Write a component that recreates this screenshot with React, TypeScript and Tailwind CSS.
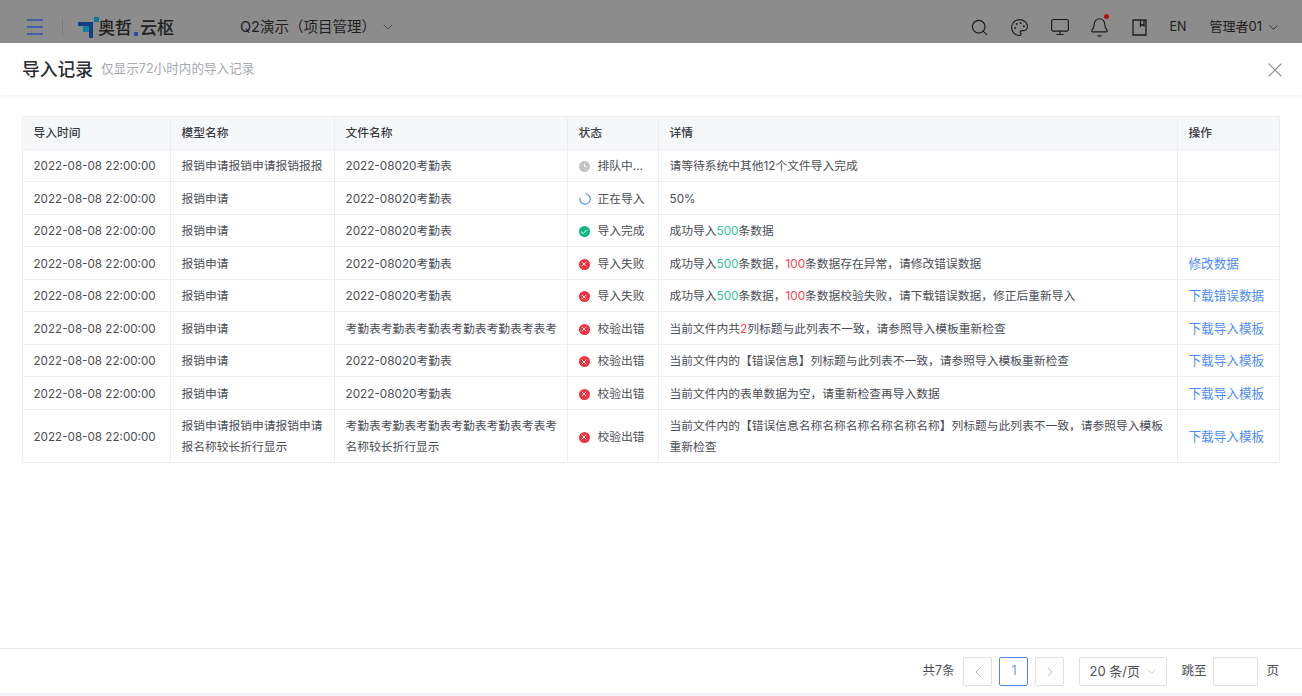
import React from "react";
import { Search, Palette, Monitor, Bell, ChevronDown, ChevronLeft, ChevronRight, X, Check } from "lucide-react";

const TIME = "2022-08-08 22:00:00";
const G = ({ children }: { children: React.ReactNode }) => <span className="text-[#32c69a]">{children}</span>;
const R = ({ children }: { children: React.ReactNode }) => <span className="text-[#f4484f]">{children}</span>;

function StatusIcon({ kind }: { kind: string }) {
  if (kind === "wait")
    return (
      <svg width="11" height="11" viewBox="0 0 11 11" fill="none">
        <circle cx="5.5" cy="5.5" r="5.5" fill="#c4c4c4" />
        <path d="M5.5 2.8v3h2.2" stroke="#fff" strokeWidth="0.9" />
      </svg>
    );
  if (kind === "run")
    return (
      <svg width="12" height="12" viewBox="0 0 12 12" fill="none">
        <path d="M6.8 0.8A5.2 5.2 0 1 1 0.9 5" stroke="#4d83f5" strokeWidth="1.1" strokeLinecap="round" />
      </svg>
    );
  if (kind === "ok")
    return (
      <span className="flex h-[11px] w-[11px] items-center justify-center rounded-full bg-[#10b77f] text-white">
        <Check size={8} strokeWidth={3} />
      </span>
    );
  return (
    <span className="flex h-[11px] w-[11px] items-center justify-center rounded-full bg-[#ef3340] text-white">
      <X size={8} strokeWidth={2.5} />
    </span>
  );
}

type Row = { model: React.ReactNode; file: React.ReactNode; kind: string; status: string; detail: React.ReactNode; op?: string; tall?: boolean };

const rows: Row[] = [
  { model: "报销申请报销申请报销报报", file: "2022-08020考勤表", kind: "wait", status: "排队中...", detail: "请等待系统中其他12个文件导入完成" },
  { model: "报销申请", file: "2022-08020考勤表", kind: "run", status: "正在导入", detail: "50%" },
  { model: "报销申请", file: "2022-08020考勤表", kind: "ok", status: "导入完成", detail: <>成功导入<G>500</G>条数据</> },
  { model: "报销申请", file: "2022-08020考勤表", kind: "err", status: "导入失败", detail: <>成功导入<G>500</G>条数据，<R>100</R>条数据存在异常，请修改错误数据</>, op: "修改数据" },
  { model: "报销申请", file: "2022-08020考勤表", kind: "err", status: "导入失败", detail: <>成功导入<G>500</G>条数据，<R>100</R>条数据校验失败，请下载错误数据，修正后重新导入</>, op: "下载错误数据" },
  { model: "报销申请", file: "考勤表考勤表考勤表考勤表考勤表考表考", kind: "err", status: "校验出错", detail: <>当前文件内共<R>2</R>列标题与此列表不一致，请参照导入模板重新检查</>, op: "下载导入模板" },
  { model: "报销申请", file: "2022-08020考勤表", kind: "err", status: "校验出错", detail: "当前文件内的【错误信息】列标题与此列表不一致，请参照导入模板重新检查", op: "下载导入模板" },
  { model: "报销申请", file: "2022-08020考勤表", kind: "err", status: "校验出错", detail: "当前文件内的表单数据为空，请重新检查再导入数据", op: "下载导入模板" },
  { model: "报销申请报销申请报销申请报名称较长折行显示", file: "考勤表考勤表考勤表考勤表考勤表考表考名称较长折行显示", kind: "err", status: "校验出错", detail: "当前文件内的【错误信息名称名称名称名称名称名称】列标题与此列表不一致，请参照导入模板重新检查", op: "下载导入模板", tall: true },
];

const th = "border border-[#edeef2] bg-[#f6f7f9] px-[10.5px] pt-[2px] text-left align-middle font-medium text-[#383c43]";
const base = "border border-[#edeef2] pl-[10.5px] pr-[9px] align-middle leading-[21px]";
const td = base + " pt-[2px]";
const slot = "flex w-[40px] justify-center";
const btn = "flex h-[29px] w-[29px] items-center justify-center rounded-[2px] border";

export default function App() {
  return (
    <div
      className="flex h-[696px] w-[1302px] flex-col overflow-hidden bg-[#f3f4f7] text-[#4a4e55]"
      style={{ fontFamily: 'Inter, "Noto Sans CJK SC", sans-serif' }}
    >
      {/* dimmed top navigation */}
      <header className="flex h-[43px] shrink-0 items-center bg-[#8c8c8c] pt-[11px] text-[#1d1d1d]">
        <svg className="ml-[27px]" width="16" height="16" viewBox="0 0 16 16" fill="none" stroke="#2a50b4" strokeWidth="1.5">
          <path d="M0 1h16M0 8h16M0 15h16" />
        </svg>
        <div className="ml-[19px] h-[18px] w-px bg-[#7d7d7d]" />
        <svg className="ml-[15px]" width="21" height="21" viewBox="0 0 21 21">
          <path d="M0 5h15v16h-4V9H0z" fill="#123f80" />
          <rect x="16" y="0" width="5" height="5" fill="#11789a" />
          <path d="M5 9h6v6H5z" fill="#0f7fa8" />
        </svg>
        <span className="ml-[-1px] mt-[3px] text-[17px] font-medium leading-none text-[#222]">奥哲</span>
        <span className="ml-[2px] mt-[14px] h-[4px] w-[4px] bg-[#1c4fb0]" />
        <span className="ml-[2px] mt-[3px] text-[17px] font-medium leading-none text-[#222]">云枢</span>
        <span className="ml-[66px] text-[14.5px] leading-none text-[#1f1f1f]">Q2演示（项目管理）</span>
        <ChevronDown className="ml-[4px] text-[#3a3a3a]" size={16} strokeWidth={1.2} />
        <div className="ml-auto flex items-center">
          <span className={slot}><Search size={19} strokeWidth={1.5} /></span>
          <span className={slot}><Palette size={19} strokeWidth={1.4} /></span>
          <span className={slot}><Monitor size={20} strokeWidth={1.4} /></span>
          <span className={slot}>
            <span className="relative flex">
              <Bell size={21} strokeWidth={1.3} />
              <span className="absolute right-[1px] top-[-3px] h-[5px] w-[5px] rounded-full bg-[#b80d0d]" />
            </span>
          </span>
          <span className={slot}>
            <svg width="15" height="17" viewBox="0 0 15 17" fill="none" stroke="#1d1d1d" strokeWidth="1.3">
              <path d="M1 1h13v15H1zM8.5 1v6l1.7-1.4L12 7V1" />
            </svg>
          </span>
          <span className="ml-[10px] text-[12.5px]">EN</span>
          <span className="ml-[23px] text-[13px]">管理者01</span>
          <ChevronDown className="ml-[4px] mr-[21px]" size={15} strokeWidth={1.2} />
        </div>
      </header>

      {/* drawer */}
      <main className="flex min-h-0 flex-1 flex-col bg-white">
        <div className="z-10 flex h-[52px] shrink-0 items-center pl-[22px] pr-[15px] pt-[1px] shadow-[0_1px_3px_rgba(30,50,110,0.08)]">
          <h1 className="text-[17.75px] font-medium leading-none text-[#2a2d33]">导入记录</h1>
          <span className="ml-[8px] text-[12.6px] leading-none text-[#a6a9af]">仅显示72小时内的导入记录</span>
          <X className="ml-auto text-[#8f8f8f]" size={24} strokeWidth={1.1} />
        </div>

        <div className="min-h-0 flex-1 px-[22px] pt-[21px]">
          <table className="w-[1257px] table-fixed border-collapse text-[11.75px]">
            <colgroup>
              <col className="w-[148px]" />
              <col className="w-[164px]" />
              <col className="w-[233px]" />
              <col className="w-[91px]" />
              <col className="w-[519px]" />
              <col className="w-[102px]" />
            </colgroup>
            <thead>
              <tr className="h-[33px]">
                {["导入时间", "模型名称", "文件名称", "状态", "详情", "操作"].map((h) => (
                  <th key={h} className={th}>{h}</th>
                ))}
              </tr>
            </thead>
            <tbody>
              {rows.map((r, i) => (
                <tr key={i} className={r.tall ? "h-[53px]" : i % 2 === 0 ? "h-[32px]" : "h-[33px]"}>
                  <td className={td + " whitespace-nowrap text-[11.67px]"}>{TIME}</td>
                  <td className={td}>{r.model}</td>
                  <td className={td}>{r.file}</td>
                  <td className={td}>
                    <div className="flex items-center whitespace-nowrap">
                      <span className="flex w-[19px] shrink-0">
                        <StatusIcon kind={r.kind} />
                      </span>
                      {r.status}
                    </div>
                  </td>
                  <td className={td}>{r.detail}</td>
                  <td className={base + " whitespace-nowrap text-[12.6px] text-[#4f8df7]"}>{r.op}</td>
                </tr>
              ))}
            </tbody>
          </table>
        </div>

        <footer className="flex h-[45px] shrink-0 items-center justify-end border-t border-[#e6e7eb] pr-[23px] pt-[1px] text-[12.5px] text-[#4a4e55]">
          <span>共7条</span>
          <button className={btn + " ml-[9px] border-[#e0e1e5] text-[#a3a5aa]"}>
            <ChevronLeft size={16} strokeWidth={1.2} />
          </button>
          <button className={btn + " ml-[7px] border-[#4f86ea] text-[#6d9bf2]"}>1</button>
          <button className={btn + " ml-[7px] border-[#e0e1e5] text-[#a3a5aa]"}>
            <ChevronRight size={16} strokeWidth={1.2} />
          </button>
          <div className="ml-[15px] flex h-[29px] w-[88px] items-center rounded-[2px] border border-[#e0e1e5] pl-[9px] text-[13px]">
            20 条/页
            <ChevronDown className="ml-[4px] text-[#b5b7bb]" size={15} strokeWidth={1.2} />
          </div>
          <span className="ml-[14px]">跳至</span>
          <div className="ml-[7px] h-[29px] w-[45px] rounded-[2px] border border-[#e0e1e5]" />
          <span className="ml-[8px]">页</span>
        </footer>
      </main>
      <div className="h-[3px] shrink-0 bg-[#f3f4f7]" />
    </div>
  );
}
